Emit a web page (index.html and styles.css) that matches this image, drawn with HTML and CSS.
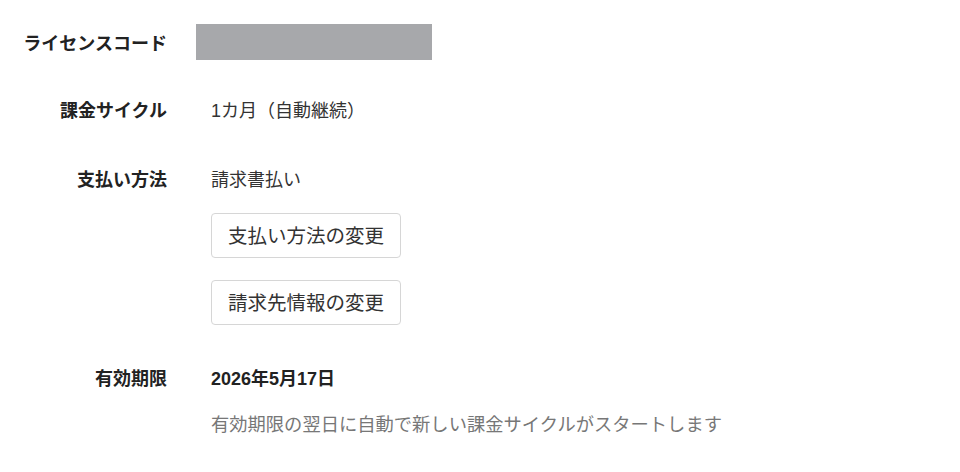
FILE: index.html
```html
<!DOCTYPE html>
<html lang="ja">
<head>
<meta charset="utf-8">
<link rel="stylesheet" href="styles.css">
</head>
<body>
<div class="page">
  <div class="row row-license">
    <div class="label">ライセンスコード</div>
    <div class="value"><div class="masked"></div></div>
  </div>
  <div class="row row-cycle">
    <div class="label">課金サイクル</div>
    <div class="value">1カ月（自動継続）</div>
  </div>
  <div class="row row-payment">
    <div class="label">支払い方法</div>
    <div class="value stack">
      <div>請求書払い</div>
      <button class="btn btn-first">支払い方法の変更</button>
      <button class="btn btn-second">請求先情報の変更</button>
    </div>
  </div>
  <div class="row row-expiry">
    <div class="label">有効期限</div>
    <div class="value stack">
      <div class="date">2026年5月17日</div>
      <div class="note">有効期限の翌日に自動で新しい課金サイクルがスタートします</div>
    </div>
  </div>
</div>
</body>
</html>
```
FILE: styles.css
```css
html, body {
  margin: 0;
  padding: 0;
  background: #ffffff;
}
body {
  font-family: "Liberation Sans", "Noto Sans CJK JP", sans-serif;
  font-size: 18px;
  line-height: 24px;
  color: #333333;
}
.page {
  padding-top: 24px;
}
.row {
  display: flex;
  column-gap: 44px;
  align-items: flex-start;
}
.label {
  width: 167px;
  flex-shrink: 0;
  text-align: right;
  font-weight: bold;
  color: #222222;
}
.row-license {
  align-items: center;
  height: 36px;
  margin-bottom: 39px;
}
.row-license .label {
  margin-top: 4px;
}
.masked {
  margin-left: -15px;
  width: 236px;
  height: 36px;
  background: #a7a8ab;
}
.row-cycle {
  margin-bottom: 45px;
}
.row-payment {
  margin-bottom: 42px;
}
.stack {
  display: flex;
  flex-direction: column;
  align-items: flex-start;
}
.btn {
  font-family: "Liberation Sans", "Noto Sans CJK JP", sans-serif;
  font-size: 19.5px;
  line-height: 24px;
  color: #333333;
  background: #ffffff;
  border: 1px solid #d6d6d6;
  border-radius: 4px;
  height: 45px;
  padding: 0 16px;
  margin: 0;
}
.btn-first {
  margin-top: 21px;
}
.btn-second {
  margin-top: 22px;
}
.date {
  font-weight: bold;
  color: #222222;
}
.note {
  margin-top: 22px;
  color: #777777;
  font-size: 18.3px;
}
```
